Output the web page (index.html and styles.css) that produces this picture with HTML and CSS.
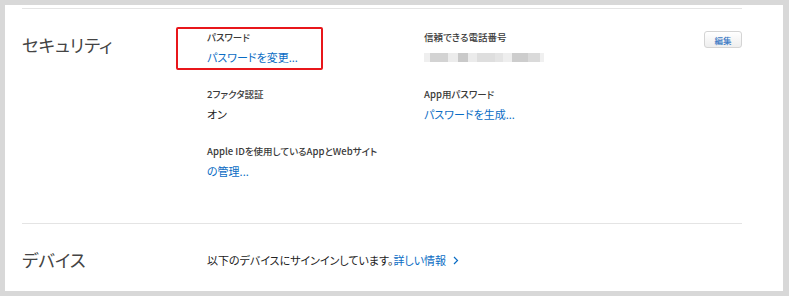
FILE: index.html
```html
<!DOCTYPE html>
<html lang="ja">
<head>
    <meta charset="UTF-8">
    <meta name="viewport" content="width=device-width, initial-scale=1.0">
    <title>Apple ID - セキュリティ</title>
    <link rel="stylesheet" href="styles.css">
</head>
<body class="body">

    <div class="panel">

        <section class="sect secu">
            <h2 class="titulo">セキュリティ</h2>

            <div class="grade">
                <div class="item marcado">
                    <div class="rot">パスワード</div>
                    <a class="link" href="#">パスワードを変更...</a>
                </div>
                <div class="item">
                    <div class="rot">信頼できる電話番号</div>
                    <div class="fone"></div>
                </div>

                <div class="item">
                    <div class="rot">2ファクタ認証</div>
                    <div class="valor">オン</div>
                </div>
                <div class="item">
                    <div class="rot">App用パスワード</div>
                    <a class="link" href="#">パスワードを生成...</a>
                </div>

                <div class="item largo">
                    <div class="rot">Apple IDを使用しているAppとWebサイト</div>
                    <a class="link" href="#">の管理...</a>
                </div>
            </div>

            <button class="editar" type="button">編集</button>
        </section>

        <section class="sect disp">
            <h2 class="titulo">デバイス</h2>
            <p class="texto">以下のデバイスにサインインしています。<a class="link" href="#">詳しい情報 <svg class="seta" width="6" height="9" viewBox="0 0 6 9"><polyline points="1,1 4.5,4.5 1,8" fill="none" stroke="#0a6cc4" stroke-width="1.2"/></svg></a></p>
        </section>

    </div>

</body>
</html>
```

FILE: styles.css
```css
.body{
    margin: 0;
    background-color: #d8d8d8;
    font-family: "Noto Sans CJK JP", "Noto Sans", sans-serif;
    font-feature-settings: "palt";
    color: #333;
}
.panel{
    margin: 5px 6px 0 5px;
    height: 286px;
    background-color: #fff;
    padding: 3px 41px 0 17px;
    box-sizing: border-box;
}
.sect{
    display: flex;
    border-top: 1px solid #e4e4e4;
}
.secu{
    padding: 21px 0 43px 0;
}
.disp{
    padding-top: 24px;
    align-items: center;
}
.titulo{
    width: 185px;
    margin: 3px 0 0 0;
    font-size: 17.5px;
    line-height: 24px;
    font-weight: normal;
    color: #444;
    flex-shrink: 0;
}
.disp .titulo{
    margin: 0;
}
.grade{
    display: grid;
    grid-template-columns: 217px 217px;
    row-gap: 21px;
    flex: 1;
}
.item{
    display: flex;
    flex-direction: column;
    gap: 4px;
    position: relative;
}
.largo{
    grid-column: 1 / -1;
}
.marcado::after{
    content: "";
    position: absolute;
    left: -31px;
    top: -3px;
    width: 143px;
    height: 39px;
    border: 2px solid #e8161b;
    border-radius: 2px;
}
.rot{
    font-size: 9.5px;
    line-height: 14px;
    font-weight: 500;
    color: #3a3a3a;
}
.valor{
    font-size: 11px;
    line-height: 18px;
    color: #222;
}
.link{
    font-size: 11px;
    line-height: 18px;
    color: #0a6cc4;
    text-decoration: none;
}
.fone{
    width: 120px;
    height: 9px;
    margin: 5px 0 4px 0;
    background: linear-gradient(to right,
        #efefef 0 6px, #d3d3d3 6px 24px, #ececec 24px 34px,
        #c9c9c9 34px 44px, #ebebeb 44px 53px, #dedede 53px 71px,
        #e4e4e4 71px 79px, #eeeeee 79px 88px, #cdcdcd 88px 104px,
        #dadada 104px 116px, #f0f0f0 116px 120px);
}
.editar{
    align-self: flex-start;
    margin-top: 1px;
    width: 38px;
    height: 17px;
    padding: 0;
    border: 1px solid #d4d4d4;
    border-radius: 3px;
    background: linear-gradient(#ffffff, #eeeeee);
    color: #3a78c4;
    font-family: inherit;
    font-size: 8.5px;
    font-weight: 500;
}
.texto{
    margin: 0;
    font-size: 11px;
    line-height: 24px;
    color: #222;
}
.seta{
    margin-left: 4px;
}
```
